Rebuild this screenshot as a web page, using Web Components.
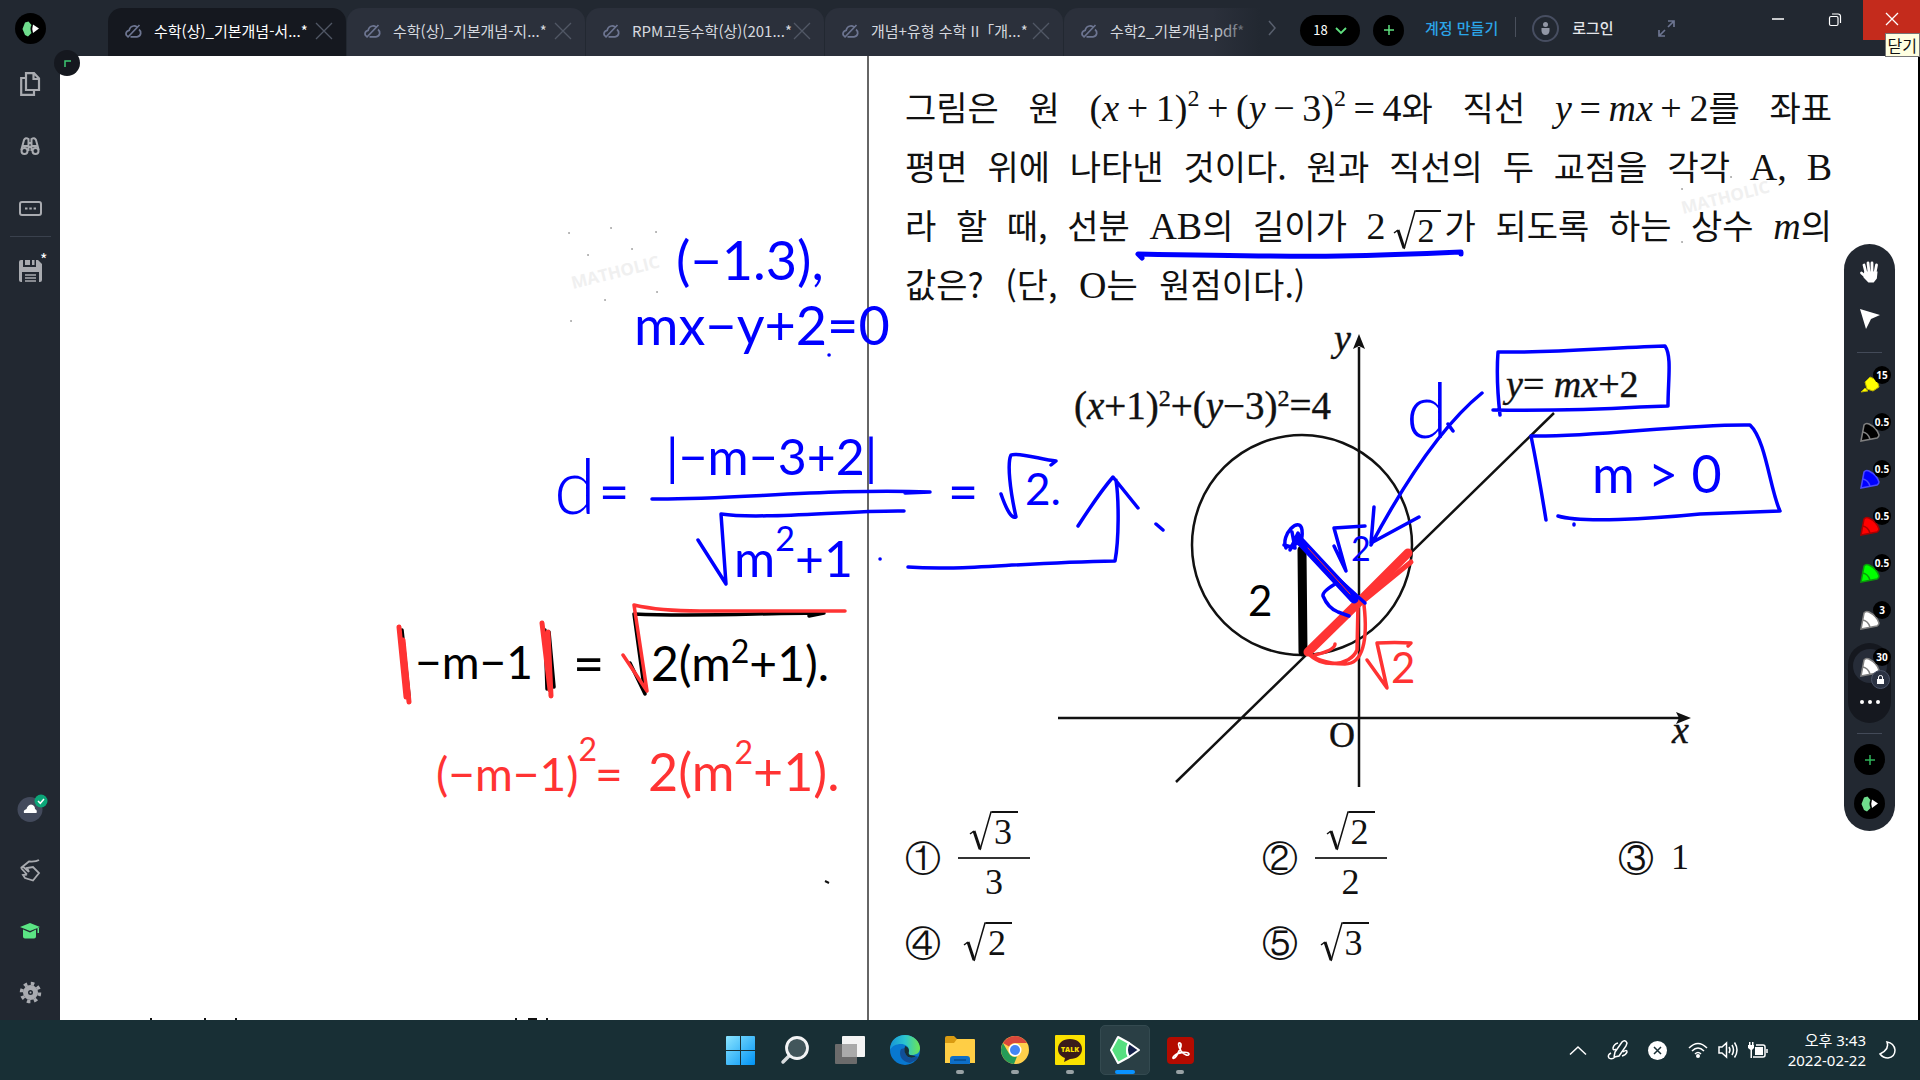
<!DOCTYPE html>
<html lang="ko">
<head>
<meta charset="utf-8">
<meta name="viewport" content="width=device-width, initial-scale=1">
<title>수학(상)_기본개념</title>
<style>
    body {
        margin: 0;
        font-family: "Noto Sans CJK KR", "Noto Sans", sans-serif;
        background: #222831;
    }
</style>
</head>
<body>
<note-app></note-app>

<script>
const baseStyle = `
    * { box-sizing: border-box; }
    button {
        display: flex;
        align-items: center;
        justify-content: center;
        margin: 0;
        padding: 0;
        border: none;
        background: none;
        color: inherit;
        font: inherit;
        cursor: pointer;
    }
    svg { display: block; overflow: visible; }
`;

// Registers an element whose shadow root holds the given styles and markup
function define(name, css, html) {
    const template = document.createElement('template');
    template.innerHTML = `<style>${baseStyle}${css}</style>${html}`;
    customElements.define(name, class extends HTMLElement {
        constructor() {
            super();
            this.attachShadow({ mode: 'open' });
            this.shadowRoot.appendChild(template.content.cloneNode(true));
        }
    });
}

/* ---------- Small parts ---------- */

define('app-logo', `
    :host { display: block; width: 31px; height: 31px; border-radius: 50%; background: #000; }
`, `
    <svg width="31" height="31" viewBox="0 0 31 31">
        <path d="M10 9.500 13.500 8.500 16.500 12Q14.500 15.500 16.500 20L13 23.500 10 22 7.500 16Z" fill="#6fdc8c"/>
        <path d="M18 11.500 24 15.500 18 20Q16.500 16 18 11.500Z" fill="#fff"/>
    </svg>
`);

define('doc-tab', `
    :host {
        display: flex;
        align-items: center;
        flex: 0 0 238px;
        height: 48px;
        padding: 0 13px 2px 17px;
        border-radius: 14px 14px 0 0;
        background: #2b303b;
        color: #d5d8df;
        font-size: 15px;
        line-height: 20px;
    }
    :host([active]) { background: #15181f; color: #fff; }
    :host([clipped]) { border-radius: 14px 0 0 0; }
    :host([clipped]) .close { display: none; }
    .name { flex: 1; margin-left: 12px; justify-content: flex-start; white-space: nowrap; }
    .close { width: 18px; height: 18px; color: #515765; }
`, `
    <svg width="17" height="15" viewBox="0 0 17 15" fill="none" stroke="#6d7591" stroke-width="1.700">
        <path d="M3 12.500Q.8 11.500 1 9.300 1.500 6.700 4.200 6.300 5 2.500 8.500 2 10.500 1.800 12 3M14 5.500Q16 7 15.700 9.500 15.200 12.500 12 12.800H5.500M14.500 1 2.500 13.500"/>
    </svg>
    <button class="name"><slot></slot></button>
    <button class="close" aria-label="탭 닫기">
        <svg width="16" height="16" viewBox="0 0 16 16" stroke="currentColor" stroke-width="1.300"><path d="M0 0 16 16M16 0 0 16"/></svg>
    </button>
`);

// Radical sign with a bar over whatever is slotted
define('math-root', `
    :host { display: inline-flex; align-items: stretch; line-height: 34px; vertical-align: middle; }
    svg { width: 22px; height: 40px; }
    span { border-top: 2px solid #111; padding: 2px 6px 0 2px; font-family: "Liberation Serif", serif; }
`, `
    <svg viewBox="0 0 22 40" fill="none" stroke="#111"><path d="M0 23 4 20" stroke-width="1.500"/><path d="M4 20 10 38" stroke-width="3"/><path d="M10 39 21 1H22" stroke-width="1.500"/></svg>
    <span><slot></slot></span>
`);

define('pen-tool', `
    :host { display: block; width: 51px; height: 47px; }
    button { position: relative; width: 51px; height: 47px; }
    .badge {
        position: absolute;
        left: 29px;
        top: 5px;
        min-width: 18px;
        height: 18px;
        border-radius: 9px;
        background: #000;
        color: #fff;
        font: 700 10px/18px "Open Sans", "Noto Sans", sans-serif;
        text-align: center;
    }
    .lock {
        position: absolute;
        left: 27px;
        top: 27px;
        width: 19px;
        height: 19px;
        border: 1px solid #4a5266;
        border-radius: 50%;
        background: #2b3242;
    }
    .nib { fill: var(--ink, #fff); stroke: var(--edge, #808080); }
    .marker { display: none; }
    :host([marker]) .marker { display: block; }
    :host([marker]) .fine { display: none; }
    .lock { display: none; }
    :host([locked]) .lock { display: block; }
    :host([locked]) button::before {
        content: "";
        position: absolute;
        left: 9px;
        top: 6px;
        width: 34px;
        height: 34px;
        border-radius: 50%;
        background: #262c38;
    }
    .pen { position: relative; }
`, `
    <button aria-label="펜">
        <svg class="pen fine" width="20" height="20" viewBox="0 0 20 20">
            <path class="nib" d="M1 19 4 3Q6 .5 9 2 17 6 19 13 19 15 17 16Z" stroke-width="1.500"/>
            <path d="M3 10Q8 11 10 17" fill="none" stroke="var(--edge, #808080)" stroke-width="1.500"/>
        </svg>
        <svg class="pen marker" width="20" height="20" viewBox="0 0 20 20">
            <path class="nib" d="M5 7 10 2 17 5 19 12 13 16 7 14ZM1 17 5 13 8 16Z" stroke-width="1"/>
        </svg>
        <span class="badge"><slot></slot></span>
        <span class="lock"><svg width="17" height="17" viewBox="0 0 17 17"><rect x="5" y="8" width="7" height="5" fill="#fff"/><path d="M6.500 8V6Q6.500 4.500 8.500 4.500T10.500 6V8" fill="none" stroke="#fff"/></svg></span>
    </button>
`);

/* ---------- Title bar ---------- */

define('title-bar', `
    :host { display: flex; height: 56px; background: #222831; color: #e4e6ea; font-size: 15px; line-height: 20px; }
    .logo { display: flex; align-items: center; justify-content: center; width: 60px; margin-right: 48px; }
    .tabs { position: relative; display: flex; align-items: flex-end; gap: 1px; width: 1152px; overflow: hidden; }
    .tabs::after {
        content: "";
        position: absolute;
        right: 0;
        bottom: 0;
        width: 48px;
        height: 48px;
        background: linear-gradient(90deg, #22283100, #222831);
    }
    .more { width: 24px; color: #59606e; }
    .actions { display: flex; align-items: center; height: 60px; margin-left: 16px; }
    .count { width: 60px; height: 31px; gap: 7px; border-radius: 16px; background: #000; font-size: 13px; color: #fff; }
    .add { width: 31px; height: 31px; margin-left: 13px; border-radius: 50%; background: #000; }
    a { margin-left: 21px; color: #2ba5e8; font-weight: 500; text-decoration: none; padding-bottom: 4px; }
    .line { width: 1px; height: 20px; margin: 0 16px 6px 17px; background: #4a505c; }
    .login { gap: 13px; padding-bottom: 4px; font-weight: 500; }
    .user { width: 27px; height: 27px; border: 2px solid #474e61; border-radius: 50%; }
    .expand { margin-left: 44px; padding-bottom: 4px; }
    .window { position: relative; display: flex; margin-left: auto; height: 40px; }
    .window button { width: 57px; height: 40px; padding-bottom: 2px; }
    .window .close { background: #c42b1c; }
    .tip {
        position: absolute;
        z-index: 3;
        right: 0;
        top: 33px;
        padding: 0 2px;
        border: 1px solid #767676;
        background: #ffffe1;
        color: #111;
        font-size: 16px;
        line-height: 22px;
        white-space: nowrap;
    }
`, `
    <div class="logo"><app-logo></app-logo></div>
    <nav class="tabs">
        <doc-tab active>수학(상)_기본개념-서...*</doc-tab>
        <doc-tab>수학(상)_기본개념-지...*</doc-tab>
        <doc-tab>RPM고등수학(상)(201...*</doc-tab>
        <doc-tab>개념+유형 수학 II「개...*</doc-tab>
        <doc-tab clipped>수학2_기본개념.pdf*</doc-tab>
    </nav>
    <button class="more" aria-label="다음 탭"><svg width="8" height="14" viewBox="0 0 8 14" fill="none" stroke="currentColor" stroke-width="1.500"><path d="M1 0 7 7 1 14"/></svg></button>
    <div class="actions">
        <button class="count">18 <svg width="12" height="7" viewBox="0 0 12 7" fill="none" stroke="#5fe07f" stroke-width="1.800"><path d="M1 1 6 6 11 1"/></svg></button>
        <button class="add" aria-label="새 탭"><svg width="10" height="10" viewBox="0 0 10 10" stroke="#5fe07f" stroke-width="1.500"><path d="M5 0V10M0 5H10"/></svg></button>
        <a href="#signup">계정 만들기</a>
        <span class="line"></span>
        <button class="login">
            <span class="user"><svg width="23" height="23" viewBox="0 0 23 23" fill="#9297a5"><circle cx="11.500" cy="7.500" r="2.500"/><path d="M7.500 11H15.500V14Q15 18 11.500 18T7.500 14Z"/></svg></span>
            로그인
        </button>
        <button class="expand" aria-label="전체 화면"><svg width="17" height="17" viewBox="0 0 17 17" fill="none" stroke="#6d7591" stroke-width="1.700"><path d="M10 1H16V7M16 1 10 7M7 16H1V10M1 16 7 10"/></svg></button>
    </div>
    <div class="window">
        <button aria-label="최소화"><svg width="12" height="2"><path d="M0 1H12" stroke="#fff" stroke-width="1.500"/></svg></button>
        <button aria-label="이전 크기로"><svg width="12" height="13" viewBox="0 0 12 13" fill="none" stroke="#fff" stroke-width="1.200"><rect x=".5" y="3.500" width="8.500" height="9" rx="1.500"/><path d="M3 1H9Q11.500 1 11.500 3.500V10"/></svg></button>
        <button class="close" aria-label="닫기"><svg width="12" height="12" viewBox="0 0 12 12" stroke="#fff" stroke-width="1.300"><path d="M0 0 12 12M12 0 0 12"/></svg></button>
        <span class="tip" role="tooltip">닫기</span>
    </div>
`);

/* ---------- Left side bar ---------- */

define('side-bar', `
    :host { display: flex; flex-direction: column; align-items: center; flex: 0 0 60px; padding: 4px 0; background: #222831; color: #a9abb0; }
    button { width: 60px; height: 48px; }
    hr { width: 41px; margin: 0 0 6px; border: none; border-top: 1px solid #3a414d; }
    .top { display: flex; flex-direction: column; align-items: center; gap: 14px; padding-bottom: 4px; }
    .bottom { display: flex; flex-direction: column; gap: 13px; margin-top: auto; }
    .save { position: relative; height: 56px; }
    .save span { position: absolute; left: 40px; top: 6px; color: #fff; font-size: 16px; line-height: 20px; }
    .corner {
        position: absolute;
        left: 54px;
        top: -6px;
        z-index: 2;
        width: 26px;
        height: 26px;
        border-radius: 50%;
        background: #15181f;
    }
`, `
    <button class="corner" aria-label="접기"><svg width="7" height="7" viewBox="0 0 7 7" fill="none" stroke="#3cc873" stroke-width="1.500"><path d="M1 7V1H7"/></svg></button>
    <div class="top">
        <button aria-label="페이지"><svg width="20" height="24" viewBox="0 0 20 24" fill="none" stroke="currentColor" stroke-width="2.200"><path d="M6 1.200H14L19 6.500V18H6ZM13.500 1V7H19M5 6H1.200V22.800H14V19"/></svg></button>
        <button aria-label="찾기"><svg width="20" height="18" viewBox="0 0 20 18" fill="none" stroke="currentColor" stroke-width="2"><path d="M1.300 13 4 3Q5.500 0 8.500 2V14M18.700 13 16 3Q14.500 0 11.500 2V14M3 9H8.500M11.500 9H17M8 6H12M8.500 10H11.500"/><circle cx="4.500" cy="14" r="3"/><circle cx="15.500" cy="14" r="3"/></svg></button>
        <button aria-label="키보드"><svg width="23" height="15" viewBox="0 0 23 15"><rect x="1" y="1" width="21" height="13" rx="2" fill="none" stroke="currentColor" stroke-width="2"/><path d="M6 7.500H17" stroke="currentColor" stroke-width="2" stroke-dasharray="2.500 1.800"/></svg></button>
    </div>
    <hr>
    <button class="save" aria-label="저장"><svg width="23" height="22" viewBox="0 0 23 22"><path d="M0 2Q0 0 2 0H4V7H17V0H19L23 4V20Q23 22 21 22H20V12H3V22H2Q0 22 0 20ZM6 0H11V5H6ZM13 0H15.500V5H13Z" fill="currentColor"/><path d="M6 15H17M6 18H17M6 21H17" stroke="currentColor" stroke-width="1.700"/></svg><span>*</span></button>
    <div class="bottom">
        <button aria-label="클라우드"><svg width="25" height="25" viewBox="0 0 25 25"><circle cx="12" cy="12.500" r="12.500" fill="#434a5c"/><path d="M6 16Q5 13 8.500 12 9.500 8 13 7.500 17 8 17 12 19.500 13 18.500 16Z" fill="#fff"/><circle cx="23" cy="4" r="6.500" fill="#0ca678"/><path d="M20 4 22.300 6.300 26 2" fill="none" stroke="#fff" stroke-width="1.500"/></svg></button>
        <button aria-label="손 제스처"><svg width="20" height="23" viewBox="0 0 20 23" fill="none" stroke="currentColor" stroke-width="1.800"><path d="M19 1Q16 3 9 2.500L1.500 8.500M1 9Q2 7 4 8.500L9 13M1 9 7 15.500M9 13 7 9 13 8 19 14 13 21.500 5 19 3 16 7 15.500"/></svg></button>
        <button aria-label="학습"><svg width="20" height="16" viewBox="0 0 20 16" fill="#5be584"><path d="M10 0 20 4 10 8 0 4ZM3 6.500 10 9.500 16 6.500V13.500Q16 15.500 14 15.500H5Q3 15.500 3 13.500ZM17.500 5H19V10H17.500Z"/></svg></button>
        <button aria-label="설정"><svg width="21" height="21" viewBox="-10.500 -10.500 21 21"><circle r="5" fill="none" stroke="currentColor" stroke-width="5"/><circle r="9" fill="none" stroke="currentColor" stroke-width="3.500" stroke-dasharray="3.500 3.570"/><circle r="1" fill="currentColor"/></svg></button>
    </div>
`);

/* ---------- Worksheet ---------- */

// The printed figure: axes, circle and the line y = mx + 2
define('circle-figure', `
    :host { display: block; margin-top: 3px; }
    svg { width: 100%; }
    text { font: 38px "Liberation Serif", serif; fill: #111; stroke: #111; stroke-width: .4px; }
    .i { font-style: italic; }
    .s { font-size: 24px; }
`, `
    <svg viewBox="905 317 927 480" role="img" aria-label="원과 직선의 그래프">
        <g fill="none" stroke="#111" stroke-width="2.500">
            <path d="M1058 719H1680M1359 788V348M1176 783 1554 414"/>
            <circle cx="1302" cy="546" r="110"/>
        </g>
        <path d="M1359 335 1365 350 1359 347 1353 350ZM1691 719 1676 713 1679 719 1676 725Z" fill="#111"/>
        <text x="1074" y="420" style="font-size: 39px">(<tspan class="i">x</tspan>+1)<tspan class="s" dy="-13">2</tspan><tspan dy="13">+(</tspan><tspan class="i">y</tspan>−3)<tspan class="s" dy="-13">2</tspan><tspan dy="13">=4</tspan></text>
        <text x="1506" y="398"><tspan class="i">y</tspan>= <tspan class="i">mx</tspan>+2</text>
        <text class="i" x="1334" y="352">y</text>
        <text class="i" x="1672" y="744">x</text>
        <text x="1329" y="748" style="font-size: 36px">O</text>
    </svg>
`);

define('answer-choice', `
    :host { display: flex; align-items: center; font-size: 36px; line-height: 48px; }
    .num { font-family: "Noto Sans CJK KR", sans-serif; font-weight: 300; width: 34px; margin-right: 19px; }
    ::slotted(*) { font-family: "Liberation Serif", serif; }
`, `
    <span class="num"><slot name="num"></slot></span><slot></slot>
`);

define('math-problem', `
    :host { display: block; padding: 21px 86px 0 36px; color: #111; font-size: 34px; line-height: 59px; }
    p { margin: 0; }
    .line { display: block; height: 59px; white-space: nowrap; text-align: justify; text-align-last: justify; }
    .last { text-align-last: left; word-spacing: 12px; }
    .line math-root { margin: 0 4px 0 8px; }
    b, i { font-family: "Liberation Serif", serif; font-weight: 400; font-size: 38px; }
    sup { font: 24px/1 "Liberation Serif", serif; vertical-align: 15px; }
    .choices { display: grid; grid-template-columns: 5fr 5fr 3fr; grid-template-rows: 122px 48px; font-weight: 300; }
    .frac { display: inline-flex; flex-direction: column; align-items: center; width: 72px; line-height: 42px; }
    .frac > :first-child { width: 72px; justify-content: center; padding-bottom: 6px; border-bottom: 2px solid #333; }
    .frac > :last-child { padding-top: 2px; }
    .root { margin-left: 6px; }
`, `
    <p>
        <span class="line">그림은 원 <b>(</b><i>x</i><b>&#8201;+&#8201;1)</b><sup>2</sup><b>&#8201;+&#8201;(</b><i>y</i><b>&#8201;−&#8201;3)</b><sup>2</sup><b>&#8201;=&#8201;4</b>와 직선 <i>y</i><b>&#8201;=&#8201;</b><i>mx</i><b>&#8201;+&#8201;2</b>를 좌표</span>
        <span class="line">평면 위에 나타낸 것이다. 원과 직선의 두 교점을 각각 <b>A,</b> <b>B</b></span>
        <span class="line">라 할 때, 선분 <b>AB</b>의 길이가 <b>2</b><math-root>2</math-root>가 되도록 하는 상수 <i>m</i>의</span>
        <span class="line last">값은? (단, <b>O</b>는 원점이다.)</span>
    </p>
    <circle-figure></circle-figure>
    <div class="choices">
        <answer-choice><span slot="num">①</span><span class="frac"><math-root>3</math-root><span>3</span></span></answer-choice>
        <answer-choice><span slot="num">②</span><span class="frac"><math-root>2</math-root><span>2</span></span></answer-choice>
        <answer-choice><span slot="num">③</span><span>1</span></answer-choice>
        <answer-choice><span slot="num">④</span><math-root class="root">2</math-root></answer-choice>
        <answer-choice><span slot="num">⑤</span><math-root class="root">3</math-root></answer-choice>
    </div>
`);

// Pen strokes and notes laid over the whole sheet
define('ink-layer', `
    :host { position: absolute; inset: 0; overflow: hidden; pointer-events: none; }
    svg { width: 100%; }
    path { fill: none; stroke-width: 3.500; stroke-linecap: round; stroke-linejoin: round; }
    text { font-family: Lato, sans-serif; font-weight: 400; }
    .blue { stroke: #00f; }
    .red { stroke: #f33; }
    .black { stroke: #000; }
    .hair { stroke-width: 1; }
    .wide { stroke-width: 5; }
    .thick { stroke-width: 9; }
    .light { font-weight: 300; }
    text.blue { fill: #00f; stroke: none; }
    text.red { fill: #f33; stroke: none; }
    text.black { fill: #000; stroke: none; }
    .mark { font: 700 17px "Open Sans", sans-serif; fill: #f0f0f0; }
    .speck { stroke: #aaa; stroke-width: 2; }
    .cut { stroke: #111; stroke-width: 2; stroke-linecap: butt; }
`, `
    <svg viewBox="60 56 1858 964">
        <text class="mark" transform="translate(573 289) rotate(-14)">MATHOLIC</text>
        <text class="mark" transform="translate(1683 214) rotate(-14)">MATHOLIC</text>
        <path class="speck" d="M569 233h.1M611 228h.1M656 232h.1M588 255h.1M632 249h.1M657 292h.1M605 300h.1M571 321h.1M1682 189h.1M1731 177h.1M1682 242h.1"/>

        <path class="blue wide" d="M1142 258 1138 254Q1290 257 1340 256T1461 252V254"/>

        <text class="blue" x="676" y="280" font-size="54">(−1.3),</text>
        <text class="blue" x="634" y="345" font-size="54">mx−y+2=0</text>
        <path class="blue" d="M829 355h.1"/>

        <text class="blue light" x="554" y="514" font-size="76">d</text>
        <text class="blue" x="599" y="511" font-size="52">=</text>
        <text class="blue" x="666" y="475" font-size="50">|−m−3+2|</text>
        <path class="blue" d="M652 499C730 500 830 488 930 492M905 493 930 492"/>
        <path class="blue" d="M698 540 726 584 721 514C760 520 850 510 904 511"/>
        <text class="blue" x="734" y="577" font-size="50">m<tspan dy="-26" font-size="34">2</tspan><tspan dy="26">+1</tspan></text>
        <path class="blue" d="M880 559h.1"/>
        <text class="blue" x="948" y="511" font-size="52">=</text>
        <path class="blue" d="M1001 494Q1010 520 1016 517C1010 490 1007 463 1011 455 1018 452 1040 459 1056 461L1051 465"/>
        <text class="blue" x="1025" y="505" font-size="44">2.</text>
        <path class="blue" d="M908 567C960 571 1010 563 1115 561 1119 540 1119 500 1116 480M1078 526Q1100 492 1113 477L1138 508M1156 524 1163 530"/>

        <path class="blue" d="M1498 352C1560 353 1600 348 1665 346 1672 356 1668 380 1668 406L1640 407Q1570 411 1493 410M1500 415Q1496 380 1498 352"/>
        <path class="blue" d="M1531 436C1600 437 1680 424 1750 425 1766 440 1770 490 1780 511L1700 514C1650 519 1580 523 1558 516M1531 436Q1538 470 1546 520M1574 524v1"/>
        <text class="blue" x="1592" y="493" font-size="52">m &gt; 0</text>
        <text class="blue light" x="1406" y="438" font-size="76">d</text>
        <path class="blue" d="M1482 393Q1430 435 1371 545M1374 507 1371 543 1419 517M1448 424 1453 431"/>

        <path class="black thick" d="M1302 550 1303 652"/>
        <path class="red thick" d="M1308 652 1359 602 1408 553"/>
        <path class="red wide" d="M1362 602 1411 562"/>
        <path class="red" d="M1308 653C1320 668 1350 667 1357 650L1358 604M1364 605C1368 640 1363 664 1345 664 1325 664 1312 658 1309 652M1315 655Q1335 650 1335 644"/>
        <path class="blue thick" d="M1299 540 1354 599"/>
        <path class="blue" d="M1286 548C1280 535 1300 515 1302 530 1304 550 1290 540 1290 550L1298 533 1304 548 1365 603M1284 545 1295 548 1292 532"/>
        <path class="red hair" d="M1308 548 1350 594"/>
        <path class="blue" d="M1335 584Q1322 592 1323 596 1328 608 1338 612L1349 616"/>
        <path class="blue" d="M1334 546 1346 571 1334 528 1365 526"/>
        <text class="blue" x="1351" y="561" font-size="34">2</text>
        <text class="black" x="1248" y="616" font-size="42">2</text>
        <path class="red" d="M1367 660 1387 688 1377 643Q1395 642 1411 643L1408 646"/>
        <text class="red" x="1391" y="683" font-size="42">2</text>

        <path class="black" d="M402 630 409 696M545 630 547 689M549 632 554 687"/>
        <path class="red wide" d="M399 627 406 697M403 640 409 702M542 623 550 690M548 632 551 696"/>
        <text class="black" x="415" y="679" font-size="46">−m−1</text>
        <text class="black" x="573" y="683" font-size="54">=</text>
        <path class="black" d="M630 663 645 694 634 614C700 617 760 613 824 613L809 616"/>
        <path class="red" d="M623 655 647 691 634 605Q660 611 700 611L845 611"/>
        <text class="black" x="651" y="681" font-size="48">2(m<tspan dy="-18" font-size="32">2</tspan><tspan dy="18">+1).</tspan></text>

        <text class="red" x="436" y="791" font-size="46">(−m−1)<tspan dy="-30" font-size="32">2</tspan></text>
        <text class="red" x="595" y="792" font-size="48">=</text>
        <text class="red" x="648" y="791" font-size="52">2(m<tspan dy="-27" font-size="32">2</tspan><tspan dy="27">+1).</tspan></text>
        <path class="cut" d="M825 881 829 883"/>
        <path class="cut" d="M150 1019h2M204 1019h2M235 1019h2M515 1019h2M528 1019h9M546 1019h2"/>
    </svg>
`);

define('work-sheet', `
    :host { position: relative; display: grid; grid-template-columns: 807fr 1051fr; flex: 1; min-width: 0; border-right: 2px solid #000; background: #fff; }
    section { border-left: 2px solid #666; min-width: 0; }
`, `
    <div></div>
    <section><math-problem></math-problem></section>
    <ink-layer></ink-layer>
`);

/* ---------- Floating pen dock ---------- */

define('tool-dock', `
    :host {
        position: absolute;
        right: 25px;
        top: 188px;
        display: flex;
        flex-direction: column;
        align-items: center;
        width: 51px;
        height: 587px;
        padding-top: 4px;
        border-radius: 26px;
        background: #222831;
    }
    .tool { width: 51px; height: 47px; }
    hr { width: 25px; margin: 10px 0 8px; border: none; border-top: 1px solid #434a58; }
    .group { display: flex; flex-direction: column; align-items: center; gap: 4px; width: 43px; height: 80px; border-radius: 22px; background: #15181f; }
    .dots { width: 43px; height: 16px; }
    .round { width: 31px; height: 31px; margin-top: 2px; border-radius: 50%; background: #000; }
    app-logo { margin-top: 13px; }
`, `
    <button class="tool" aria-label="이동"><svg width="20" height="22" viewBox="0 0 20 22" fill="none" stroke="#fff" stroke-width="2.800" stroke-linecap="round"><path d="M6 12 4 4M9 11 8 2M12 11V2M15 12 16.500 4M6 16 1.500 12"/><path d="M5.500 12H16L15.500 17 13 20H9L5 16Z" fill="#fff"/></svg></button>
    <button class="tool" aria-label="선택"><svg width="20" height="20" viewBox="0 0 20 20"><path d="M0 0 20 6 11 10 6 20Z" fill="#fff"/></svg></button>
    <hr>
    <pen-tool marker style="--ink: #ff0; --edge: #bbb200">15</pen-tool>
    <pen-tool style="--ink: #000">0.5</pen-tool>
    <pen-tool style="--ink: #00f; --edge: #4a4aff">0.5</pen-tool>
    <pen-tool style="--ink: #f00; --edge: #a00">0.5</pen-tool>
    <pen-tool style="--ink: #0f0; --edge: #0a9a0a">0.5</pen-tool>
    <pen-tool>3</pen-tool>
    <div class="group">
        <pen-tool locked>30</pen-tool>
        <button class="dots" aria-label="더 보기"><svg width="20" height="4" viewBox="0 0 20 4" fill="#fff"><circle cx="2" cy="2" r="2"/><circle cx="10" cy="2" r="2"/><circle cx="18" cy="2" r="2"/></svg></button>
    </div>
    <hr>
    <button class="round" aria-label="도구 추가"><svg width="10" height="10" viewBox="0 0 10 10" stroke="#2fb35a" stroke-width="1.500"><path d="M5 0V10M0 5H10"/></svg></button>
    <app-logo></app-logo>
`);

/* ---------- Windows task bar ---------- */

define('task-button', `
    :host { display: block; }
    button { position: relative; width: 50px; height: 50px; border: 1px solid transparent; border-radius: 5px; }
    :host([running]) button::after {
        content: "";
        position: absolute;
        left: 20px;
        bottom: 0;
        width: 8px;
        height: 4px;
        border-radius: 2px;
        background: #98a2a5;
    }
    :host([active]) button { background: #2a3f45; border-color: #344a50; }
    :host([active]) button::after { left: 14px; width: 20px; background: #0a93ff; }
`, `<button><slot></slot></button>`);

define('task-bar', `
    :host { display: grid; grid-template-columns: 1fr auto 1fr; align-items: center; height: 60px; background: #182f35; color: #fff; }
    .apps { display: flex; gap: 5px; grid-column: 2; }
    .tray { display: flex; align-items: center; justify-content: flex-end; padding-right: 24px; }
    .tray svg { fill: none; stroke: #fff; stroke-width: 1.500; }
    .tray .solid { fill: #fff; stroke: none; }
    .pen { margin-left: 22px; }
    .stop { margin-left: 20px; }
    .status { gap: 10px; margin: 0 20px 0 21px; }
    .clock { font-size: 15px; line-height: 20px; text-align: right; display: block; margin-right: 13px; font-family: "Noto Sans", "Noto Sans CJK KR", sans-serif; }
`, `
    <div class="apps">
        <task-button><svg width="29" height="29" viewBox="0 0 29 29"><defs><linearGradient id="w" x2="1" y2="1"><stop stop-color="#8be5ff"/><stop offset="1" stop-color="#0093f5"/></linearGradient></defs><path d="M0 1Q0 0 1 0H14V14H0ZM15 0H28Q29 0 29 1V14H15ZM0 15H14V29H1Q0 29 0 28ZM15 15H29V28Q29 29 28 29H15Z" fill="url(#w)"/></svg></task-button>
        <task-button><svg width="28" height="28" viewBox="0 0 28 28"><path d="M9 19 2 26" stroke="#d8dcde" stroke-width="3.500" stroke-linecap="round"/><circle cx="16" cy="12" r="10.500" fill="#42565b" stroke="#f3f4f5" stroke-width="2.800"/></svg></task-button>
        <task-button><svg width="30" height="28" viewBox="0 0 30 28"><rect y="8" width="22" height="20" rx="1" fill="#6b6b6b"/><rect x="7" width="23" height="21" rx="1" fill="#f4f4f4"/><path d="M7 8H22V21H7Z" fill="#aaa"/></svg></task-button>
        <task-button><svg width="30" height="30" viewBox="0 0 30 30"><defs><linearGradient id="e" x2="1"><stop stop-color="#1795d7"/><stop offset=".5" stop-color="#2bc5cf"/><stop offset="1" stop-color="#6de553"/></linearGradient></defs><circle cx="15" cy="15" r="15" fill="#0878d0"/><path d="M0 13C1 5 7 0 15 0 24 0 30 7 30 13 30 18 26 20 22 20 18 20 18 18 19 16 19 11 15 9 11 9 6 9 2 11 0 15Z" fill="url(#e)"/><path d="M11 14C8 20 12 27 20 28L26 25C29 23 28 20 25 22 18 25 14 20 15 13Z" fill="#114f98"/><path d="M15 11Q19 12 19 16 18 19 20 20L26 21Q23 24 18 22 13 18 15 11Z" fill="#182f35"/></svg></task-button>
        <task-button running><svg width="30" height="28" viewBox="0 0 30 28"><path d="M0 2Q0 0 2 0H9L12 3V10H0Z" fill="#d99b12"/><path d="M0 7H9L12 3H29Q30 3 30 4V27H0Z" fill="#ffce45"/><path d="M5 28V23Q5 20 8 20H22Q25 20 25 23V28Z" fill="#0d6fc8"/><path d="M9 24H21" stroke="#064b8e" stroke-width="1.500"/></svg></task-button>
        <task-button running><svg width="28" height="28" viewBox="0 0 28 28"><circle cx="14" cy="14" r="14" fill="#ffd04b"/><path d="M1.900 7A14 14 0 0 1 26.100 7H14A7 7 0 0 0 8 10.500Z" fill="#d9483b"/><path d="M1.900 7 8 17.500A7 7 0 0 0 16 20.500L13 28A14 14 0 0 1 1.900 7Z" fill="#259b58"/><circle cx="14" cy="14" r="6.500" fill="#fff"/><circle cx="14" cy="14" r="5" fill="#4486f4"/></svg></task-button>
        <task-button running><svg width="30" height="30" viewBox="0 0 30 30"><rect width="30" height="30" rx="1" fill="#fae100"/><path d="M15 4C22 4 27 8 27 14S22 24 15 24L9 27 10 23C5 21 3 18 3 14 3 8 8 4 15 4Z" fill="#391b1b"/><text x="15" y="17" text-anchor="middle" font-family="Open Sans, sans-serif" font-size="7" font-weight="800" fill="#fae100">TALK</text></svg></task-button>
        <task-button running active><svg width="30" height="28" viewBox="0 0 30 28" stroke="#fff" stroke-width="2" stroke-linejoin="round"><path d="M8 1 19 7Q15 14 19 21L8 27 1 14Z" fill="#56df80"/><path d="M19 7 29 14 19 21Q15 14 19 7Z" fill="#14204a"/></svg></task-button>
        <task-button running><svg width="27" height="27" viewBox="0 0 27 27"><rect width="27" height="27" rx="4" fill="#b30b00"/><path d="M13 6C11 5 11 9 14 14 18 19 22 19 22 17 21 14 11 15 7 19 4 22 8 23 11 16 14 11 15 7 13 6Z" fill="none" stroke="#fff" stroke-width="1.700"/></svg></task-button>
    </div>
    <div class="tray">
        <button aria-label="숨겨진 아이콘"><svg width="16" height="9" viewBox="0 0 16 9"><path d="M0 8.500 8 1 16 8.500"/></svg></button>
        <button class="pen" aria-label="펜 메뉴"><svg width="20" height="20" viewBox="0 0 20 20"><path d="M3 13Q-1 15 1 18 4 20 7 17M6 17 7 12 14 2Q17-1 19 3L18 6 11 16 6 17M10 3Q6 4 5 8 5 11 8 9M15 12Q19 9 19 12 18 15 14 16"/></svg></button>
        <button class="stop" aria-label="중지"><svg width="19" height="19" viewBox="0 0 19 19"><circle class="solid" cx="9.500" cy="9.500" r="9.500"/><path d="M6 6 13 13M13 6 6 13" stroke="#182f35"/></svg></button>
        <button class="status" aria-label="네트워크, 소리, 배터리">
            <svg width="20" height="16" viewBox="0 0 20 16"><path d="M1 6Q10-3 19 6M4 9Q10 3 16 9M7 12Q10 9 13 12"/><circle class="solid" cx="10" cy="14" r="2"/></svg>
            <svg width="20" height="18" viewBox="0 0 20 18"><path d="M1 6H4L8.500 2V16L4 12H1ZM11 6Q13 9 11 12M14 4Q17 9 14 14M16.500 1.500Q21.500 9 16.500 16.500"/></svg>
            <svg width="20" height="16" viewBox="0 0 20 16"><path class="solid" d="M0 3H1V0H2.500V3H4V0H5.500V3H6V6L4 8V16H2.500V8L0 6Z"/><rect x="7" y="5" width="8" height="8" class="solid"/><path d="M8 3H15Q17 3 17 5V13Q17 15 15 15H5M19 7V11"/></svg>
        </button>
        <button class="clock">오후 3:43<br>2022-02-22</button>
        <button aria-label="알림"><svg width="17" height="18" viewBox="0 0 17 18"><path d="M8 1Q11 8 1 13 4 17 9 17 16 16 16 9 15 2 8 1Z"/></svg></button>
    </div>
`);

define('note-app', `
    :host { display: flex; flex-direction: column; min-height: 100vh; }
    main { position: relative; display: flex; flex: 1; }
`, `
    <title-bar></title-bar>
    <main>
        <side-bar></side-bar>
        <work-sheet></work-sheet>
        <tool-dock></tool-dock>
    </main>
    <task-bar></task-bar>
`);
</script>
</body>
</html>
